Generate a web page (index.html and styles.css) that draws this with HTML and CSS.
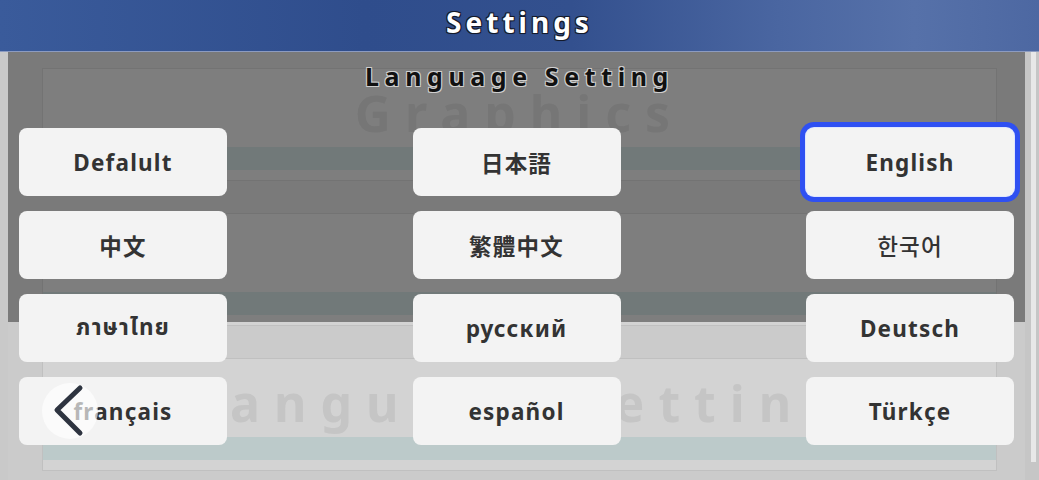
FILE: index.html
```html
<!DOCTYPE html>
<html lang="en">

<head>
  <meta charset="UTF-8" />
  <meta name="viewport" content="width=device-width, initial-scale=1.0" />
  <title>Settings</title>
  <link rel="stylesheet" href="styles.css">
</head>

<body>
  <header class="topbar">
    <h1>Settings</h1>
  </header>

  <div class="stage">
    <!-- settings page behind the dialog -->
    <div class="page">
      <div class="gutter"></div>
      <div class="panel">
        <section class="card">
          <div class="card-title">Graphics</div>
          <div class="card-bar"></div>
        </section>
        <section class="card">
          <div class="card-title"></div>
          <div class="card-bar"></div>
        </section>
        <section class="card">
          <div class="card-title">Language Setting</div>
          <div class="card-bar"></div>
        </section>
      </div>
      <div class="scroll">
        <div class="scroll-thumb"></div>
      </div>
    </div>

    <!-- language dialog -->
    <div class="modal">
      <div class="dim"></div>
      <div class="dialog">
        <h2>Language Setting</h2>
        <div class="lang-grid">
          <button class="lang-btn">Defalult</button>
          <button class="lang-btn cjk">日本語</button>
          <button class="lang-btn selected">English</button>
          <button class="lang-btn cjk">中文</button>
          <button class="lang-btn cjk tc">繁體中文</button>
          <button class="lang-btn kr">한국어</button>
          <button class="lang-btn">ภาษาไทย</button>
          <button class="lang-btn">русский</button>
          <button class="lang-btn">Deutsch</button>
          <button class="lang-btn">français</button>
          <button class="lang-btn">español</button>
          <button class="lang-btn">Türkçe</button>
        </div>
      </div>
      <button class="back-btn" aria-label="back">
        <svg width="56" height="56" viewBox="0 0 56 56">
          <path d="M38 5 L15 27 L38 50" fill="none" stroke="#2e3440" stroke-width="5" stroke-linecap="round" stroke-linejoin="round" />
        </svg>
      </button>
    </div>
  </div>
</body>

</html>
```

FILE: styles.css
```css
* {
  box-sizing: border-box;
}

body {
  margin: 0;
  width: 1039px;
  height: 480px;
  overflow: hidden;
  background: #c9c9c9;
  font-family: 'Noto Sans', 'Noto Sans Thai', 'Noto Sans CJK JP', sans-serif;
}

.topbar {
  height: 52px;
  background: linear-gradient(90deg, #3a5b9b 0%, #2f4d8c 35%, #33508e 55%, #4a66a1 75%, #5671a9 88%, #4d68a2 100%);
  border-bottom: 1px solid #8c9bc0;
  display: flex;
  justify-content: center;
}

.topbar h1 {
  margin: 0;
  padding-top: 3px;
  font-size: 28px;
  line-height: 38px;
  font-weight: 700;
  letter-spacing: 4px;
  color: #fff;
  text-shadow: -1px -1px 0 #141a2a, 1px -1px 0 #141a2a, -1px 1px 0 #141a2a, 1px 1px 0 #141a2a, 0 0 2px #141a2a;
}

.stage {
  position: relative;
  height: 428px;
}

/* background page */
.page {
  display: flex;
  height: 100%;
}

.gutter {
  width: 8px;
  background: #c9c9c9;
}

.panel {
  flex: 1;
  padding: 16px 28px 0 34px;
  background: #cbcbcb;
}

.card {
  height: 113px;
  margin-bottom: 32px;
  border: 1px solid #c0c0c0;
  background: #d3d3d3;
}

.card-title {
  height: 50px;
  margin-top: 19px;
  font-size: 50px;
  line-height: 50px;
  font-weight: 700;
  letter-spacing: 14px;
  text-align: center;
  color: #c5c5c5;
  white-space: nowrap;
}

.card-bar {
  height: 23px;
  margin-top: 9px;
  background: #bccaca;
}

.scroll {
  width: 14px;
  display: flex;
  background: #c6c6c6;
  padding: 0 3px 0 6px;
}

.scroll-thumb {
  flex: 1;
  height: 410px;
  background: #e8e8e8;
}

/* dialog */
.modal {
  position: absolute;
  inset: 0;
}

.dim {
  position: absolute;
  left: 8px;
  top: 0;
  width: 1017px;
  height: 270px;
  background: rgba(0, 0, 0, 0.4);
}

.dialog {
  position: relative;
}

.dialog h2 {
  margin: 0;
  padding-top: 8px;
  text-align: center;
  font-size: 25px;
  line-height: 32px;
  font-weight: 700;
  letter-spacing: 5.6px;
  color: #111;
  text-shadow: -1px -1px 0 #cfcfcf, 1px -1px 0 #cfcfcf, -1px 1px 0 #cfcfcf, 1px 1px 0 #cfcfcf;
}

.lang-grid {
  display: grid;
  grid-template-columns: repeat(3, 208px);
  grid-auto-rows: 68px;
  justify-content: space-between;
  row-gap: 15px;
  margin-top: 36px;
  padding: 0 25px 0 19px;
}

.lang-btn {
  border: none;
  border-radius: 8px;
  background: #f3f3f3;
  color: #333;
  font-family: inherit;
  font-size: 22.5px;
  font-weight: 700;
  letter-spacing: 1.2px;
  padding: 0;
}

.lang-btn.cjk {
  font-family: 'Noto Sans CJK JP', sans-serif;
}

.lang-btn.tc {
  font-family: 'Noto Sans CJK TC', sans-serif;
}

.lang-btn.kr {
  font-family: 'Noto Sans CJK KR', sans-serif;
  font-weight: 500;
}

.lang-btn.selected {
  box-shadow: 0 0 0 1px #dfe6ff, 0 0 0 6px #2f50f2;
}

.back-btn {
  position: absolute;
  left: 42px;
  top: 331px;
  width: 56px;
  height: 56px;
  padding: 0;
  border: none;
  border-radius: 50%;
  background: rgba(255, 255, 255, 0.65);
}

.back-btn svg {
  display: block;
}
```
